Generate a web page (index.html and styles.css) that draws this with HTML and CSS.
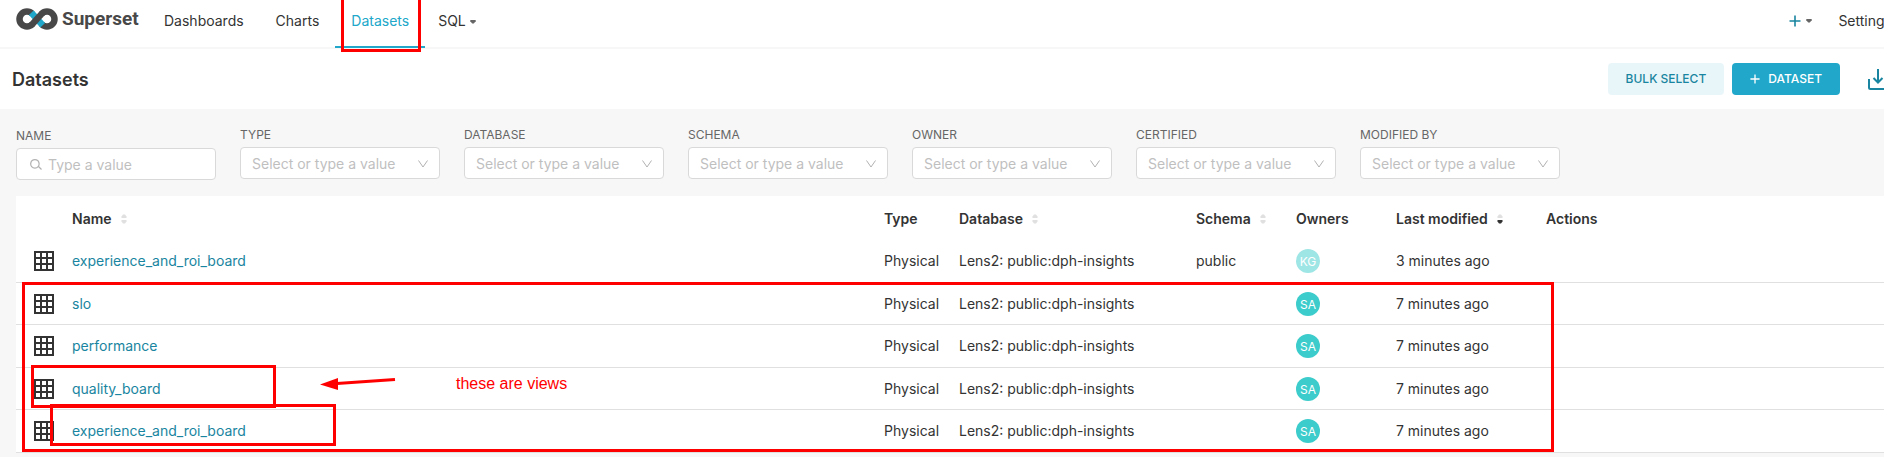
FILE: index.html
```
<!DOCTYPE html>
<html lang="en">
<head>
<meta charset="utf-8">
<title>Superset - Datasets</title>
<link rel="stylesheet" href="styles.css">
</head>
<body>
<svg class="defs" aria-hidden="true">
  <symbol id="grid" viewBox="0 0 20 20"><path d="M1 1h18v18H1zM7 1v18M13 1v18M1 7h18M1 13h18" fill="none" stroke="currentColor" stroke-width="2"/></symbol>
  <symbol id="chev" viewBox="0 0 12 12"><path d="M1.500 2.500 6 9l4.500-6.500" fill="none" stroke="currentColor" stroke-width="1"/></symbol>
  <symbol id="sort" viewBox="0 0 6 10"><path class="up" d="M.5 4V2.500L2 .500h2l1.500 2V4z"/><path class="down" d="M.5 6v1.500l1.500 2h2l1.500-2V6z"/></symbol>
  <symbol id="plus" viewBox="0 0 12 12"><path d="M6 .5v11M.5 6h11" fill="none" stroke="currentColor" stroke-width="1.600"/></symbol>
  <symbol id="caret" viewBox="0 0 6 4"><path d="M.3 0h5.400v1.200L3.800 3.500H2.200L.3 1.200z" fill="currentColor"/></symbol>
</svg>
<div class="page">
  <header class="nav">
    <a class="brand" href="#" aria-label="Superset">
      <svg class="brand-mark" viewBox="0 0 42 22" aria-hidden="true">
        <path d="M16.300 5.700a7.500 7.500 0 1 0 0 10.600M25.700 16.300a7.500 7.500 0 1 0 0-10.600" fill="none" stroke="#484848" stroke-width="6.500"/>
        <path d="m15.300 4.800 11.400 12.400" stroke="#20a7c9" stroke-width="6.500"/>
        <path d="M15.700 16.900 26.300 5.100" stroke="#484848" stroke-width="6.500"/>
      </svg>
      <span>Superset</span>
    </a>
    <nav class="menu">
      <a href="#">Dashboards</a>
      <a href="#">Charts</a>
      <a href="#" class="active">Datasets</a>
      <a href="#" class="drop">SQL <svg class="caret"><use href="#caret"/></svg></a>
    </nav>
    <div class="nav-right">
      <button class="add" type="button" aria-label="Add"><svg class="plus"><use href="#plus"/></svg><svg class="caret"><use href="#caret"/></svg></button>
      <a href="#">Settings</a>
    </div>
  </header>
  <div class="toolbar">
    <h1>Datasets</h1>
    <div class="actions">
      <button class="btn" type="button">BULK SELECT</button>
      <button class="btn primary" type="button"><svg class="plus-small"><use href="#plus"/></svg>DATASET</button>
      <button class="import" type="button" aria-label="Import datasets"><svg viewBox="0 0 24 24"><path d="M3 12v8.500a1.500 1.500 0 0 0 1.500 1.500h15a1.500 1.500 0 0 0 1.500-1.500V12M12 2v13M7.500 11l4.500 4.500 4.500-4.500" fill="none" stroke="currentColor" stroke-width="2"/></svg></button>
    </div>
  </div>
  <main>
    <form class="filters">
      <div class="filter search"><label for="f-name">NAME</label><div class="field"><svg class="glass" viewBox="0 0 12 12"><path d="M9 5A4.200 4.200 0 1 1 .8 5 4.200 4.200 0 0 1 9 5zM8 8l3.500 3.500" fill="none" stroke="currentColor" stroke-width="1.200"/></svg><input id="f-name" type="text" placeholder="Type a value"></div></div>
      <div class="filter"><label for="f-type">TYPE</label><div class="field"><select id="f-type"><option>Select or type a value</option></select><svg class="chev"><use href="#chev"/></svg></div></div>
      <div class="filter"><label for="f-db">DATABASE</label><div class="field"><select id="f-db"><option>Select or type a value</option></select><svg class="chev"><use href="#chev"/></svg></div></div>
      <div class="filter"><label for="f-schema">SCHEMA</label><div class="field"><select id="f-schema"><option>Select or type a value</option></select><svg class="chev"><use href="#chev"/></svg></div></div>
      <div class="filter"><label for="f-owner">OWNER</label><div class="field"><select id="f-owner"><option>Select or type a value</option></select><svg class="chev"><use href="#chev"/></svg></div></div>
      <div class="filter"><label for="f-cert">CERTIFIED</label><div class="field"><select id="f-cert"><option>Select or type a value</option></select><svg class="chev"><use href="#chev"/></svg></div></div>
      <div class="filter"><label for="f-mod">MODIFIED BY</label><div class="field"><select id="f-mod"><option>Select or type a value</option></select><svg class="chev"><use href="#chev"/></svg></div></div>
    </form>
    <table>
      <colgroup><col class="c-icon"><col><col class="c-type"><col class="c-db"><col class="c-schema"><col class="c-owners"><col class="c-mod"><col class="c-act"></colgroup>
      <thead><tr><th></th><th>Name<svg class="sort"><use href="#sort"/></svg></th><th>Type</th><th>Database<svg class="sort"><use href="#sort"/></svg></th><th>Schema<svg class="sort"><use href="#sort"/></svg></th><th>Owners</th><th>Last modified<svg class="sort desc"><use href="#sort"/></svg></th><th>Actions</th></tr></thead>
      <tbody>
        <tr><td><svg class="grid"><use href="#grid"/></svg></td><td><a href="#">experience_and_roi_board</a></td><td>Physical</td><td>Lens2: public:dph-insights</td><td>public</td><td><span class="avatar light">KG</span></td><td>3 minutes ago</td><td></td></tr>
        <tr><td><svg class="grid"><use href="#grid"/></svg></td><td><a href="#">slo</a></td><td>Physical</td><td>Lens2: public:dph-insights</td><td></td><td><span class="avatar">SA</span></td><td>7 minutes ago</td><td></td></tr>
        <tr><td><svg class="grid"><use href="#grid"/></svg></td><td><a href="#">performance</a></td><td>Physical</td><td>Lens2: public:dph-insights</td><td></td><td><span class="avatar">SA</span></td><td>7 minutes ago</td><td></td></tr>
        <tr><td><svg class="grid"><use href="#grid"/></svg></td><td><a href="#">quality_board</a></td><td>Physical</td><td>Lens2: public:dph-insights</td><td></td><td><span class="avatar">SA</span></td><td>7 minutes ago</td><td></td></tr>
        <tr><td><svg class="grid"><use href="#grid"/></svg></td><td><a href="#">experience_and_roi_board</a></td><td>Physical</td><td>Lens2: public:dph-insights</td><td></td><td><span class="avatar">SA</span></td><td>7 minutes ago</td><td></td></tr>
      </tbody>
    </table>
  </main>
</div>
<div class="mark mark-tab"></div>
<div class="mark mark-rows"></div>
<div class="mark mark-quality"></div>
<div class="mark mark-roi"></div>
<svg class="arrow" viewBox="0 0 76 14" aria-hidden="true"><path d="M17 6.500 75 2.500" stroke="#f00" stroke-width="3"/><path d="M0 7.500 18 1v12z" fill="#f00"/></svg>
<p class="note">these are views</p>
</body>
</html>
```

FILE: styles.css
```
* { box-sizing: border-box; }
body {
  margin: 0;
  position: relative;
  overflow: hidden;
  min-height: 100vh;
  background: #f7f7f7;
  color: #333;
  font: 14px/20px Inter, "Liberation Sans", sans-serif;
}
a { color: inherit; text-decoration: none; }
button { font: inherit; border: 0; background: none; padding: 0; }
.defs { display: none; }
/* The page runs a little wider than the window. */
.page { width: calc(100% + 24px); }

.nav {
  display: flex;
  height: 49px;
  padding: 0 16px;
  background: #fff;
  border-bottom: 2px solid #f7f7f7;
}
.brand {
  display: flex;
  align-items: center;
  gap: 4px;
  width: 132px;
  height: 38px;
  color: #484848;
  font: 700 19px/24px Roboto, sans-serif;
}
.brand-mark { width: 42px; height: 22px; }
.menu { display: flex; }
.menu a {
  height: 48px;
  padding: 11px 16px 0;
  border-bottom: 2px solid transparent;
}
.menu .active { color: #20a7c9; border-color: #20a7c9; }
.menu .drop { padding-left: 13px; }
.caret { width: 6px; height: 4px; color: #666; vertical-align: middle; }
.nav-right { display: flex; gap: 26px; margin-left: auto; height: 42px; align-items: center; }
.add { display: flex; align-items: center; gap: 5px; }
.plus { width: 12px; height: 12px; color: #1985a0; }

.toolbar {
  display: flex;
  align-items: center;
  justify-content: space-between;
  height: 60px;
  padding: 0 18px 0 12px;
  background: #fff;
}
h1 { margin: 0; padding-top: 2px; font-size: 18px; line-height: 24px; font-weight: 600; }
.actions { display: flex; align-items: center; gap: 8px; }
.btn {
  height: 32px;
  padding: 0 18px;
  border-radius: 4px;
  background: #e9f6f9;
  color: #1985a0;
  font-size: 12px;
  font-weight: 500;
}
.primary { display: flex; align-items: center; gap: 8px; background: #20a7c9; color: #fff; }
.plus-small { width: 10px; height: 10px; }
.import { display: flex; margin-left: 18px; color: #1985a0; }
.import svg { width: 24px; height: 24px; }

main { padding: 16px 0 0 16px; }
.filters { display: flex; gap: 24px; height: 71px; }
.filter { width: 200px; }
.search { padding-top: 1px; }
.filter label { display: block; height: 22px; color: #666; font-size: 12px; line-height: 20px; }
.field { position: relative; }
.field input, .field select {
  appearance: none;
  display: block;
  width: 100%;
  height: 32px;
  padding: 1px 11px 0;
  border: 1px solid #d9d9d9;
  border-radius: 4px;
  background: #fff;
  color: #bfbfbf;
  font: inherit;
}
.field input { padding-left: 31px; }
.field input::placeholder { color: #bfbfbf; }
.glass { position: absolute; left: 14px; top: 10px; width: 12px; height: 12px; color: #b2b2b2; }
.chev { position: absolute; right: 11px; top: 11px; width: 12px; height: 12px; color: #b2b2b2; }

table { width: 100%; border-collapse: separate; border-spacing: 0; table-layout: fixed; background: #fff; }
.c-icon { width: 40px; }
.c-type { width: 75px; }
.c-db { width: 237px; }
.c-schema { width: 100px; }
.c-owners { width: 100px; }
.c-mod { width: 150px; }
.c-act { width: 378px; }
th, td { padding: 0 0 0 16px; text-align: left; white-space: nowrap; }
th { height: 44px; padding-top: 2px; font-weight: 600; }
td { height: 43px; border-bottom: 1px solid #e0e0e0; }
tr:nth-child(even) td { height: 42px; }
td:first-child { padding-left: 18px; }
td a { color: #1985a0; }
.grid { display: block; width: 20px; height: 20px; color: #333; }
.sort { width: 6px; height: 10px; margin-left: 9px; fill: #e0e0e0; }
.desc { --down: #333; }
.down { fill: var(--down, #e0e0e0); }
.avatar {
  display: block;
  width: 24px;
  height: 24px;
  border-radius: 50%;
  background: #3ccccb;
  color: #fff;
  font-size: 12px;
  line-height: 26px;
  text-align: center;
}
.light { background: #9ee5e5; }

/* Hand-placed annotations drawn over the page. */
.mark { position: absolute; border: 3px solid #f00; }
.mark-tab { left: 341px; top: -4px; width: 80px; height: 56px; }
.mark-rows { left: 22px; top: 282px; width: 1532px; height: 170px; }
.mark-quality { left: 31px; top: 365px; width: 245px; height: 43px; }
.mark-roi { left: 50px; top: 404px; width: 286px; height: 42px; }
.arrow { position: absolute; left: 320px; top: 377px; width: 76px; height: 14px; }
.note { position: absolute; left: 456px; top: 374px; margin: 0; color: #f00; font: 16px/20px "Liberation Sans", Arial, sans-serif; }
```
